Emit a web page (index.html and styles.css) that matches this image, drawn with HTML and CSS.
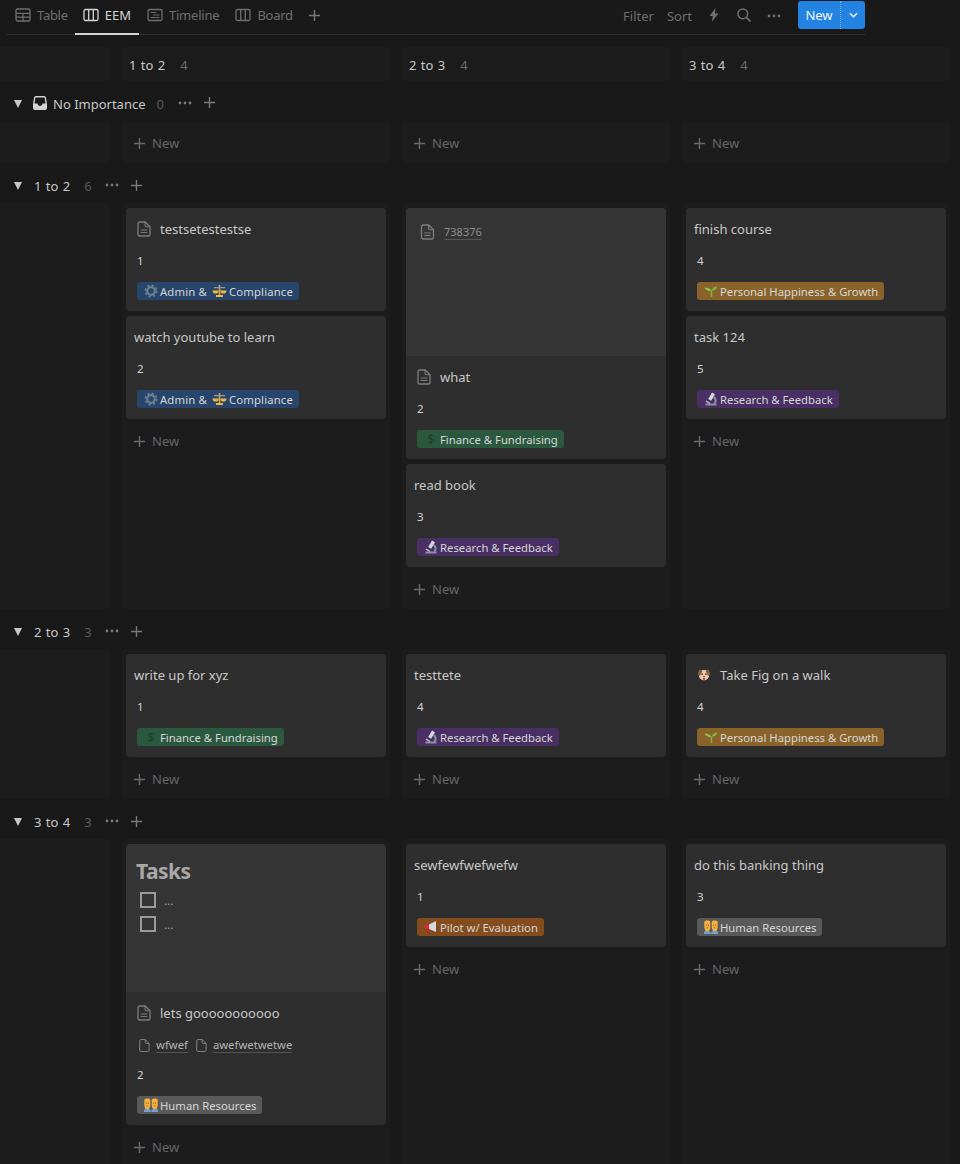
FILE: index.html
```html
<!DOCTYPE html>
<html lang="en">
<head>
    <meta charset="UTF-8">
    <meta name="viewport" content="width=device-width, initial-scale=1.0">
    <title>EEM Board</title>
    <link rel="stylesheet" href="styles.css">
</head>
<body>
    <!-- Shared icons -->
    <svg class="sprite" aria-hidden="true">
        <symbol id="i-table" viewBox="0 0 16 16"><path d="M2.500 2h11A1.500 1.500 0 0 1 15 3.500v9a1.500 1.500 0 0 1-1.500 1.500h-11A1.500 1.500 0 0 1 1 12.500v-9A1.500 1.500 0 0 1 2.500 2z" fill="none" stroke="currentColor" stroke-width="1.300"/><path d="M1 5.800h14v1.200H1zM1 9.500h14v1.200H1zM7.400 6h1.200v8H7.400z" fill="currentColor"/></symbol>
        <symbol id="i-board" viewBox="0 0 16 16"><rect x="1" y="2.500" width="14" height="11" rx="1.500" fill="none" stroke="currentColor" stroke-width="1.300"/><path d="M5.700 2.500v11M10.300 2.500v11" stroke="currentColor" stroke-width="1.300"/></symbol>
        <symbol id="i-timeline" viewBox="0 0 16 16"><rect x="1" y="2.500" width="14" height="11" rx="1.500" fill="none" stroke="currentColor" stroke-width="1.300"/><path d="M3.500 5.500h6M6 8h6.500M3.500 10.500h9" stroke="currentColor" stroke-width="1.200"/></symbol>
        <symbol id="i-plus" viewBox="0 0 14 14"><path d="M7 1v12M1 7h12" stroke="currentColor" stroke-width="1.500"/></symbol>
        <symbol id="i-dots" viewBox="0 0 14 4"><circle cx="2" cy="2" r="1.400" fill="currentColor"/><circle cx="7" cy="2" r="1.400" fill="currentColor"/><circle cx="12" cy="2" r="1.400" fill="currentColor"/></symbol>
        <symbol id="i-page" viewBox="0 0 14 16"><path d="M2.600 1h5.600L13 5.800v7.600a1.600 1.600 0 0 1-1.600 1.600H2.600A1.600 1.600 0 0 1 1 13.400V2.600A1.600 1.600 0 0 1 2.600 1z" fill="none" stroke="currentColor" stroke-width="1.300"/><path d="M8 1.200v3.400a1.200 1.200 0 0 0 1.200 1.200h3.600M3.800 9h6.400M3.800 11.500h6.400" fill="none" stroke="currentColor" stroke-width="1.100"/></symbol>
        <symbol id="i-blank" viewBox="0 0 12 15"><path d="M2.200 1h4.600L11 5.200v7.300A1.500 1.500 0 0 1 9.500 14H2.200A1.500 1.500 0 0 1 .8 12.500v-10A1.500 1.500 0 0 1 2.200 1z" fill="none" stroke="currentColor" stroke-width="1"/><path d="M6.800 1.200v3a1 1 0 0 0 1 1h3" fill="none" stroke="currentColor" stroke-width="1"/></symbol>
        <symbol id="i-inbox" viewBox="0 0 14 14"><path d="M3 0h8a2 2 0 0 1 2 1.700l1 6.300v4a2 2 0 0 1-2 2H2a2 2 0 0 1-2-2V8l1-6.300A2 2 0 0 1 3 0zm0 1.500a.7.7 0 0 0-.7.6L1.500 7.500H4.500a2.500 2.500 0 0 0 5 0h3l-.8-5.400a.7.7 0 0 0-.7-.6z" fill="currentColor" fill-rule="evenodd"/></symbol>
        <symbol id="e-gear" viewBox="0 0 14 14"><circle cx="7" cy="7" r="3.800" fill="none" stroke="#6f7f92" stroke-width="2.200"/><circle cx="7" cy="7" r="5.700" fill="none" stroke="#6f7f92" stroke-width="1.600" stroke-dasharray="2.200 2.270"/></symbol>
        <symbol id="e-scales" viewBox="0 0 14 14"><path d="M6.200 1h1.600v10H6.200z" fill="#e0a63a"/><path d="M1.500 3h11v1.300h-11z" fill="#8f9aa6"/><path d="M0 6.500h6.200a3.100 3.100 0 0 1-6.200 0zM7.800 6.500H14a3.100 3.100 0 0 1-6.200 0z" fill="#f4b63f"/><path d="M3.500 11h7v2h-7z" fill="#f4b63f"/></symbol>
        <symbol id="e-scope" viewBox="0 0 14 14"><path d="M1.500 13.500h11v-2h-11z" fill="#8c93a0"/><path d="M8 .5l3 1.800-3.800 6.500-3-1.800z" fill="#d4d8de"/><path d="M9.500 5a4.200 4.200 0 0 1 .8 6.800" fill="none" stroke="#8c93a0" stroke-width="2"/><path d="M2.500 8.500l4 2.400-1.200 1-3.800-2.300z" fill="#b9bec7"/></symbol>
        <symbol id="e-sprout" viewBox="0 0 14 14"><path d="M7.500 13V6.500" stroke="#7cb342" stroke-width="1.600"/><path d="M7.500 7C6 4 3 3.500.5 3.500 1.500 6 4 7.500 7.500 7z" fill="#8bc34a"/><path d="M7.500 6.500C8.500 4 11 2.500 13.500 2.500 13 5 10.500 7 7.500 6.500z" fill="#7cb342"/></symbol>
        <symbol id="e-horn" viewBox="0 0 14 14"><path d="M0 6l5-1.500v4.500l-5-1z" fill="#e0293d"/><path d="M5 4.500l7-3.500v11L5 9z" fill="#d5dae0"/><path d="M2.500 9l2.500.3.500 3.500-2 .5z" fill="#c9202f"/></symbol>
        <symbol id="e-people" viewBox="0 0 14 14"><path d="M0 14v-2l2-1.500h2l2.700 1.500v2zM7.300 14v-2l2.700-1.500h2l2 1.500v2z" fill="#6fa3d6"/><path d="M.3 2.500C.3 1 1 .5 3.300.5S6.300 1 6.300 2.500v5.500L5 11H1.600L.3 8zM7.700 2.500C7.700 1 8.400.5 10.700.5S13.700 1 13.700 2.500v5.500L12.400 11H9L7.700 8z" fill="#f6b03b"/><path d="M2 4.500h.800v1.200H2zM4 4.500h.800v1.200H4zM9.300 4.500h.800v1.200h-.800zM11.300 4.500h.800v1.200h-.800zM2.500 7.500h1.600v.800H2.500zM9.800 7.500h1.600v.800H9.800z" fill="#8a5a14"/></symbol>
        <symbol id="e-dog" viewBox="0 0 16 16"><circle cx="8" cy="8" r="6" fill="#e8c9ac"/><path d="M2.500 2.500c2-1 3-.5 3.500 1L3.500 9 1 7.500c0-2 .5-4 1.500-5zM13.500 2.500c-2-1-3-.5-3.500 1L12.500 9 15 7.500c0-2-.5-4-1.500-5z" fill="#8d5a3a"/><circle cx="5.800" cy="7" r=".9" fill="#33231a"/><circle cx="10.200" cy="7" r=".9" fill="#33231a"/><path d="M6.800 9h2.400L8 10.500z" fill="#33231a"/><path d="M7 11h2v2.500a1 1 0 0 1-2 0z" fill="#e0293d"/></symbol>
    </svg>

    <!-- View tabs and actions -->
    <div class="topbar">
        <div class="tabs">
            <div class="tab tab-first"><svg class="tab-icon"><use href="#i-table"/></svg>Table</div>
            <div class="tab active"><svg class="tab-icon"><use href="#i-board"/></svg>EEM</div>
            <div class="tab tab-wide"><svg class="tab-icon"><use href="#i-timeline"/></svg>Timeline</div>
            <div class="tab"><svg class="tab-icon"><use href="#i-board"/></svg>Board</div>
            <svg class="tab-add"><use href="#i-plus"/></svg>
        </div>
        <div class="actions">
            <span class="action filter">Filter</span>
            <span class="action sort">Sort</span>
            <svg class="bolt" viewBox="0 0 10 14"><path d="M6.500 0L.5 8h3.300L2.800 14 9.500 5.500H6z" fill="currentColor"/></svg>
            <svg class="search" viewBox="0 0 14 14"><circle cx="5.800" cy="5.800" r="4.900" fill="none" stroke="currentColor" stroke-width="1.500"/><path d="M9.300 9.300l4.200 4.200" stroke="currentColor" stroke-width="1.700"/></svg>
            <svg class="more"><use href="#i-dots"/></svg>
            <div class="new-btn">
                <span class="new-label">New</span>
                <span class="new-arrow"><svg viewBox="0 0 10 6"><path d="M1 1l4 4 4-4" fill="none" stroke="currentColor" stroke-width="1.500"/></svg></span>
            </div>
        </div>
    </div>

    <!-- Column headers -->
    <div class="row head-row">
        <div class="col"></div>
        <div class="col col-head">1 to 2<span class="count">4</span></div>
        <div class="col col-head">2 to 3<span class="count">4</span></div>
        <div class="col col-head">3 to 4<span class="count">4</span></div>
    </div>

    <!-- No Importance -->
    <div class="group group-inbox">
        <span class="caret"></span>
        <svg class="inbox"><use href="#i-inbox"/></svg>
        <span class="group-name">No Importance</span>
        <span class="group-count">0</span>
        <svg class="group-dots"><use href="#i-dots"/></svg>
        <svg class="group-add"><use href="#i-plus"/></svg>
    </div>
    <div class="row row-empty">
        <div class="col"></div>
        <div class="col"><div class="add"><svg><use href="#i-plus"/></svg>New</div></div>
        <div class="col"><div class="add"><svg><use href="#i-plus"/></svg>New</div></div>
        <div class="col"><div class="add"><svg><use href="#i-plus"/></svg>New</div></div>
    </div>

    <!-- 1 to 2 -->
    <div class="group">
        <span class="caret"></span>
        <span class="group-name">1 to 2</span>
        <span class="group-count">6</span>
        <svg class="group-dots"><use href="#i-dots"/></svg>
        <svg class="group-add"><use href="#i-plus"/></svg>
    </div>
    <div class="row">
        <div class="col"></div>
        <div class="col">
            <div class="card">
                <div class="card-title"><svg class="page"><use href="#i-page"/></svg>testsetestestse</div>
                <div class="num">1</div>
                <span class="tag blue"><svg><use href="#e-gear"/></svg>Admin &amp; <svg class="inner"><use href="#e-scales"/></svg>Compliance</span>
            </div>
            <div class="card">
                <div class="card-title plain">watch youtube to learn</div>
                <div class="num">2</div>
                <span class="tag blue"><svg><use href="#e-gear"/></svg>Admin &amp; <svg class="inner"><use href="#e-scales"/></svg>Compliance</span>
            </div>
            <div class="add"><svg><use href="#i-plus"/></svg>New</div>
        </div>
        <div class="col">
            <div class="card">
                <div class="cover">
                    <div class="cover-link"><svg class="page"><use href="#i-page"/></svg><span>738376</span></div>
                </div>
                <div class="card-title"><svg class="page"><use href="#i-page"/></svg>what</div>
                <div class="num">2</div>
                <span class="tag green"><span class="dollar">$</span>Finance &amp; Fundraising</span>
            </div>
            <div class="card">
                <div class="card-title plain">read book</div>
                <div class="num">3</div>
                <span class="tag purple"><svg><use href="#e-scope"/></svg>Research &amp; Feedback</span>
            </div>
            <div class="add"><svg><use href="#i-plus"/></svg>New</div>
        </div>
        <div class="col">
            <div class="card">
                <div class="card-title plain">finish course</div>
                <div class="num">4</div>
                <span class="tag yellow"><svg><use href="#e-sprout"/></svg>Personal Happiness &amp; Growth</span>
            </div>
            <div class="card">
                <div class="card-title plain">task 124</div>
                <div class="num">5</div>
                <span class="tag purple"><svg><use href="#e-scope"/></svg>Research &amp; Feedback</span>
            </div>
            <div class="add"><svg><use href="#i-plus"/></svg>New</div>
        </div>
    </div>

    <!-- 2 to 3 -->
    <div class="group">
        <span class="caret"></span>
        <span class="group-name">2 to 3</span>
        <span class="group-count">3</span>
        <svg class="group-dots"><use href="#i-dots"/></svg>
        <svg class="group-add"><use href="#i-plus"/></svg>
    </div>
    <div class="row">
        <div class="col"></div>
        <div class="col">
            <div class="card">
                <div class="card-title plain">write up for xyz</div>
                <div class="num">1</div>
                <span class="tag green"><span class="dollar">$</span>Finance &amp; Fundraising</span>
            </div>
            <div class="add"><svg><use href="#i-plus"/></svg>New</div>
        </div>
        <div class="col">
            <div class="card">
                <div class="card-title plain">testtete</div>
                <div class="num">4</div>
                <span class="tag purple"><svg><use href="#e-scope"/></svg>Research &amp; Feedback</span>
            </div>
            <div class="add"><svg><use href="#i-plus"/></svg>New</div>
        </div>
        <div class="col">
            <div class="card">
                <div class="card-title"><svg class="page"><use href="#e-dog"/></svg>Take Fig on a walk</div>
                <div class="num">4</div>
                <span class="tag yellow"><svg><use href="#e-sprout"/></svg>Personal Happiness &amp; Growth</span>
            </div>
            <div class="add"><svg><use href="#i-plus"/></svg>New</div>
        </div>
    </div>

    <!-- 3 to 4 -->
    <div class="group">
        <span class="caret"></span>
        <span class="group-name">3 to 4</span>
        <span class="group-count">3</span>
        <svg class="group-dots"><use href="#i-dots"/></svg>
        <svg class="group-add"><use href="#i-plus"/></svg>
    </div>
    <div class="row">
        <div class="col"></div>
        <div class="col">
            <div class="card">
                <div class="cover">
                    <div class="cover-heading">Tasks</div>
                    <div class="todo"><span class="box"></span>...</div>
                    <div class="todo"><span class="box"></span>...</div>
                </div>
                <div class="card-title"><svg class="page"><use href="#i-page"/></svg>lets gooooooooooo</div>
                <div class="links">
                    <svg><use href="#i-blank"/></svg><span>wfwef</span>
                    <svg><use href="#i-blank"/></svg><span>awefwetwetwe</span>
                </div>
                <div class="num">2</div>
                <span class="tag gray"><svg><use href="#e-people"/></svg>Human Resources</span>
            </div>
            <div class="add"><svg><use href="#i-plus"/></svg>New</div>
        </div>
        <div class="col">
            <div class="card">
                <div class="card-title plain">sewfewfwefwefw</div>
                <div class="num">1</div>
                <span class="tag orange"><svg><use href="#e-horn"/></svg>Pilot w/ Evaluation</span>
            </div>
            <div class="add"><svg><use href="#i-plus"/></svg>New</div>
        </div>
        <div class="col">
            <div class="card">
                <div class="card-title plain">do this banking thing</div>
                <div class="num">3</div>
                <span class="tag gray"><svg><use href="#e-people"/></svg>Human Resources</span>
            </div>
            <div class="add"><svg><use href="#i-plus"/></svg>New</div>
        </div>
    </div>
</body>
</html>
```

FILE: styles.css
```css
* {
    box-sizing: border-box;
    margin: 0;
    padding: 0;
}

html, body {
    height: 1164px;
    overflow: hidden;
}

body {
    background-color: #191919;
    color: #d4d4d4;
    font-family: "Noto Sans", "Open Sans", sans-serif;
    font-size: 13px;
}

.sprite {
    display: none;
}

/* Top bar */
.topbar {
    display: flex;
    justify-content: space-between;
    height: 35px;
    width: 858px;
    margin-left: 7px;
    border-bottom: 1px solid #2f2f2f;
}

.tabs {
    display: flex;
    align-items: flex-start;
}

.tab {
    display: flex;
    align-items: center;
    gap: 6px;
    height: 35px;
    padding: 0 8px 3px;
    color: #6f6f6f;
    letter-spacing: -0.300px;
    border-bottom: 2px solid transparent;
}

.tab-first {
    margin-right: -1px;
}

.tab-wide {
    letter-spacing: -0.200px;
}

.tab.active {
    color: #d4d4d4;
    letter-spacing: 0;
    border-bottom-color: #d4d4d4;
}

.tab-icon {
    width: 16px;
    height: 16px;
}

.tab-add {
    width: 13px;
    height: 13px;
    margin: 9px 0 0 7px;
    color: #7a7a7a;
}

.actions {
    display: flex;
    align-items: flex-start;
    color: #6f6f6f;
}

.action {
    line-height: 32px;
}

.sort {
    margin-left: 13px;
}

.bolt {
    width: 10px;
    height: 14px;
    margin: 8px 0 0 17px;
}

.search {
    width: 14px;
    height: 14px;
    margin: 8px 0 0 18px;
}

.more {
    width: 14px;
    height: 4px;
    margin: 14px 0 0 16px;
}

.new-btn {
    display: flex;
    width: 67px;
    height: 28px;
    margin: 1px 0 0 17px;
    background-color: #2383e2;
    color: #f0f6fc;
    border-radius: 3px;
}

.new-label {
    width: 43px;
    line-height: 28px;
    text-align: center;
    border-right: 1px dotted #7db5ee;
}

.new-arrow {
    flex: 1;
    display: flex;
    align-items: center;
    justify-content: center;
}

.new-arrow svg {
    width: 9px;
    height: 6px;
}

/* Board rows */
.row {
    display: grid;
    grid-template-columns: 110px repeat(3, 268px);
    gap: 12px;
}

.col {
    display: flex;
    flex-direction: column;
    align-items: stretch;
    gap: 5px;
    padding: 5px 4px 3px;
    background-color: #1c1c1c;
    border-radius: 0 4px 4px 0;
}

.col + .col {
    border-radius: 4px;
}

.head-row {
    margin-top: 12px;
    height: 34px;
}

.col-head {
    flex-direction: row;
    align-items: center;
    gap: 0;
    padding: 2px 7px 0;
    color: #c8c8c8;
    word-spacing: 1px;
}

.count {
    margin-left: 15px;
    color: #6b6b6b;
}

.row-empty {
    height: 41px;
}

.row-empty .col {
    padding-top: 4px;
}

/* Group headers */
.group {
    display: flex;
    align-items: center;
    height: 40px;
    padding: 6px 0 0 14px;
    color: #c8c8c8;
}

.group-inbox {
    height: 41px;
    padding-top: 4px;
}

.caret {
    width: 0;
    height: 0;
    margin-right: 12px;
    border-left: 4.500px solid transparent;
    border-right: 4.500px solid transparent;
    border-top: 8px solid #c8c8c8;
}

.inbox {
    width: 14px;
    height: 14px;
    margin: -1px 6px 0 -1px;
    color: #d4d4d4;
    flex-shrink: 0;
}

.group-name {
    margin-right: 14px;
    word-spacing: 1px;
}

.group-inbox .group-name {
    margin-right: 11px;
    word-spacing: 0;
}

.group-count {
    width: 7px;
    color: #5a5a5a;
}

.group-dots {
    width: 14px;
    height: 4px;
    margin: -2px 0 0 14px;
    color: #7a7a7a;
}

.group-add {
    width: 13px;
    height: 13px;
    margin: -2px 0 0 11px;
    color: #7a7a7a;
}

/* New button in a column */
.add {
    display: flex;
    align-items: center;
    gap: 6px;
    height: 34px;
    padding-left: 7px;
    color: #666;
}

.add svg {
    width: 13px;
    height: 13px;
    color: #6a6a6a;
}

/* Cards */
.card {
    display: flex;
    flex-direction: column;
    align-items: flex-start;
    padding-bottom: 11px;
    background-color: #2e2e2e;
    border-radius: 4px;
    overflow: hidden;
}

.cover {
    width: 100%;
    height: 148px;
    background-color: #353535;
}

.cover-link {
    display: flex;
    align-items: center;
    gap: 9px;
    padding: 16px 0 0 14px;
    font-size: 11px;
    color: #8e8e8e;
}

.cover-link span {
    border-bottom: 1px solid #555;
}

.cover-heading {
    padding: 12px 0 0 10px;
    height: 44px;
    font-size: 21px;
    line-height: 30px;
    font-weight: 700;
    letter-spacing: -0.500px;
    color: #a8a8a8;
}

.todo {
    display: flex;
    align-items: center;
    gap: 8px;
    height: 24px;
    padding-left: 14px;
    font-size: 11.500px;
    color: #a8a8a8;
}

.box {
    width: 16px;
    height: 16px;
    border: 2px solid #9b9b9b;
}

.card-title {
    display: flex;
    align-items: center;
    gap: 9px;
    height: 22px;
    margin: 10px 0 12px;
    padding-left: 11px;
    color: #c8c8c8;
}

.card-title.plain {
    padding-left: 8px;
}

.page {
    width: 14px;
    height: 16px;
    color: #7d7d7d;
    flex-shrink: 0;
}

.cover-link .page {
    width: 15px;
    height: 16px;
}

.links {
    display: flex;
    align-items: center;
    height: 18px;
    margin-bottom: 12px;
    padding-left: 13px;
    font-size: 11.300px;
    color: #b4b4b4;
}

.links svg {
    width: 11px;
    height: 15px;
    margin-right: 6px;
    color: #8a8a8a;
}

.links span {
    margin-right: 8px;
    border-bottom: 1px solid #555;
}

.num {
    height: 18px;
    margin-bottom: 12px;
    padding-left: 11px;
    font-size: 11.500px;
    line-height: 18px;
    color: #d4d4d4;
}

/* Select tags */
.tag {
    display: inline-flex;
    align-items: center;
    height: 18px;
    margin-left: 11px;
    padding: 0 6px 0 7px;
    border-radius: 3px;
    font-size: 11.300px;
    color: #d6d6d6;
    white-space: pre;
}

.tag svg {
    width: 14px;
    height: 14px;
    margin-right: 2px;
}

.tag .inner {
    width: 15px;
    margin: 0 2px 0 2px;
}

.dollar {
    width: 14px;
    margin-right: 2px;
    text-align: center;
    font-size: 13px;
    color: #1f3f2d;
}

.blue { background-color: #28456c; letter-spacing: 0.150px; }
.green { background-color: #2b593f; }
.purple { background-color: #492f64; }
.yellow { background-color: #89632a; }
.orange { background-color: #854c1d; }
.gray { background-color: #5a5a5a; }
```
